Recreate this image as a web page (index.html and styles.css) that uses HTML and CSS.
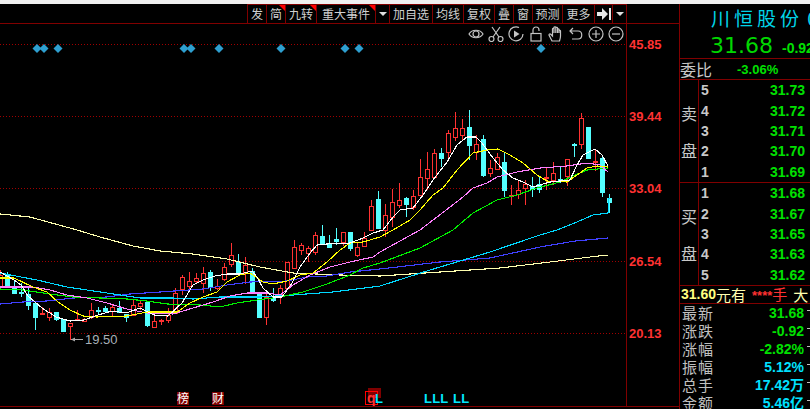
FILE: index.html
```html
<!DOCTYPE html>
<html lang="zh-CN">
<head>
    <meta charset="UTF-8">
    <title>川恒股份 K线</title>
    <link rel="stylesheet" href="styles.css">
</head>
<body>
    <div class="strip"></div>
    <div class="page">
        <div class="main">
            <div class="toolbar">
                <div class="btn w19">发</div>
                <div class="btn w19 flag">简</div>
                <div class="btn w31 flag">九转</div>
                <div class="btn w59 flag">重大事件</div>
                <div class="btn w14"><span class="caret"></span></div>
                <div class="btn w43">加自选</div>
                <div class="btn w31">均线</div>
                <div class="btn w31">复权</div>
                <div class="btn w19">叠</div>
                <div class="btn w19">窗</div>
                <div class="btn w30">预测</div>
                <div class="btn w32">更多</div>
                <div class="btn w18">
                    <svg width="14" height="12" viewBox="0 0 14 12"><path class="solid" d="M0 4H5V0L11 6L5 12V8H0ZM12 0H14V12H12Z"/></svg>
                </div>
                <div class="btn w15"><span class="caret"></span></div>
            </div>

            <div class="tools">
                <svg class="tool" viewBox="0 0 16 16"><path d="M1 8C4 3 12 3 15 8C12 13 4 13 1 8Z"/><circle cx="8" cy="8" r="3"/></svg>
                <svg class="tool" viewBox="0 0 16 16"><circle cx="3.5" cy="13" r="2.5"/><circle cx="12.5" cy="13" r="2.5"/><path d="M5 11L12 1M11 11L4 1"/></svg>
                <svg class="tool" viewBox="0 0 16 16"><path d="M11 1.5A7 7 0 1 0 15 8"/><path class="solid" d="M6 4.5L11.5 8L6 11.5Z"/></svg>
                <svg class="tool" viewBox="0 0 16 16"><rect x="3" y="7.5" width="10" height="7.5"/><path d="M5 7.5V4A3 3 0 0 1 11 4V5"/></svg>
                <svg class="tool" viewBox="0 0 16 16"><path d="M4 15L1 9C1 8 2 7.5 3 8.5L4.5 10V3C4.5 2 6 2 6 3V7V1.5C6 .5 7.8 .5 7.8 1.5V7V2C7.8 1 9.5 1 9.5 2V7V3.5C9.5 2.5 11 2.5 11 3.5V7V5C11 4 12.5 4 12.5 5V10C12.5 12 12 13.5 11.5 15Z"/></svg>
                <svg class="tool" viewBox="0 0 16 16"><path d="M5 2L2 5L5 8M2 5H10C15 5 15 13 10 13H4"/></svg>
                <svg class="tool" viewBox="0 0 16 16"><circle cx="8" cy="8" r="7"/><path d="M4 8H12M8 4V12"/></svg>
                <svg class="tool" viewBox="0 0 16 16"><circle cx="8" cy="8" r="7"/><path d="M4 8H12"/></svg>
            </div>

            <svg class="chart" viewBox="0 24 679 385" width="679" height="385">
                <line class="axis" x1="626.5" y1="24" x2="626.5" y2="406"/>
                <line class="axis" x1="0" y1="406.5" x2="679" y2="406.5"/>
                <line class="grid" x1="0" y1="44.5" x2="626" y2="44.5"/>
                <line class="grid" x1="0" y1="116.5" x2="626" y2="116.5"/>
                <line class="grid" x1="0" y1="188.5" x2="626" y2="188.5"/>
                <line class="grid" x1="0" y1="261.5" x2="626" y2="261.5"/>
                <line class="grid" x1="0" y1="333.5" x2="626" y2="333.5"/>

                <text class="price-label" x="629" y="49">45.85</text>
                <text class="price-label" x="629" y="121">39.44</text>
                <text class="price-label" x="629" y="193">33.04</text>
                <text class="price-label" x="629" y="266">26.54</text>
                <text class="price-label" x="629" y="338">20.13</text>

                <g id="diamonds"></g>
                <g id="candles"></g>

                <polyline class="ma ma-pale" points="0,214 30,217 77,230 100,237 133,246 160,251 193,254 227,259 260,267 293,273 340,275 380,276 440,272 500,268 550,262 590,257 608,255"/>
                <polyline class="ma ma-blue" points="0,304 23,302 47,301 73,298 107,297 130,294 160,292 203,289 227,285 250,282 287,281 307,277 327,276 350,272 380,269 440,262 490,258 540,247 575,241 608,238"/>
                <polyline class="ma ma-cyan" points="0,273 37,280 67,287 107,293 140,298 173,298 193,299 220,297 260,297 293,295 333,292 380,286 430,270 490,252 540,235 557,230 577,222 593,215 608,213 609,198"/>
                <polyline class="ma ma-green" points="0,289 23,290 50,294 73,297 100,298 127,299 147,301 167,304 200,305 220,307 237,303 257,300 280,297 303,292 327,284 350,275 363,268 380,263 420,248 453,230 473,213 497,200 517,195 537,188 560,182 573,176 587,170 608,168"/>
                <polyline class="ma ma-pink" points="0,287 33,287 50,290 67,295 87,298 107,303 127,309 147,313 173,314 193,308 213,302 230,296 247,293 267,293 280,295 293,285 310,275 330,267 350,262 373,257 380,252 420,230 437,217 463,197 473,188 487,183 497,177 517,172 540,168 567,166 587,163 600,165 608,172"/>
                <polyline class="ma ma-yellow" points="0,278 14,278 33,287 47,292 58,302 70,310 83,316 97,317 127,316 147,312 177,312 190,303 203,297 217,292 227,282 240,275 250,273 263,282 273,284 287,281 300,275 313,273 327,262 340,250 350,243 363,242 380,237 393,230 410,220 420,210 433,195 443,188 457,170 473,153 487,150 498,149 510,155 523,163 537,175 547,181 567,182 577,175 587,168 597,166 608,167"/>
                <polyline class="ma ma-white" points="0,272 14,280 21,285 28,296 42,308 56,317 70,321 84,320 98,315 112,311 126,313 140,308 154,315 168,316 182,303 193,285 203,280 215,276 227,274 240,274 252,271 257,277 263,288 273,297 282,297 292,283 300,267 310,253 317,245 327,244 350,243 363,238 373,233 383,230 393,217 400,210 413,208 423,195 433,180 447,162 457,145 467,137 476,137 482,143 493,158 503,170 513,178 523,182 533,187 550,182 570,180 577,165 583,155 595,149 602,155 608,166"/>

                <line class="low-arrow" x1="71" y1="339.5" x2="83" y2="339.5"/>
                <path class="low-head" d="M71 339.5L75 337.5V341.5Z"/>
                <text class="low-label" x="85" y="344">19.50</text>

                <rect class="mark-box" x="177" y="392" width="12" height="13"/>
                <text class="mark-text" x="177" y="403">榜</text>
                <rect class="mark-box" x="212" y="392" width="12" height="13"/>
                <text class="mark-text" x="212" y="403">财</text>
                <rect class="mark-box" x="368" y="388" width="13" height="10"/>
                <rect class="mark-frame" x="365.5" y="391.5" width="12" height="13"/>
                <text class="mark-q" x="367" y="403">q</text>
                <text class="mark-l" x="375" y="403">L</text>
                <text class="mark-l" x="424" y="403">LLL</text>
                <text class="mark-l" x="453" y="403">LL</text>
            </svg>
        </div>

        <div class="side">
            <div class="title">川恒股份 0</div>
            <div class="last-row">
                <span class="last">31.68</span>
                <span class="change">-0.92</span>
            </div>
            <div class="ratio-row">
                <span class="ratio-label">委比</span>
                <span class="ratio-value">-3.06%</span>
            </div>

            <div class="book">
                <div class="book-side"><span>卖</span><span>盘</span></div>
                <div class="book-rows">
                    <div class="book-row"><b>5</b><span>31.73</span></div>
                    <div class="book-row"><b>4</b><span>31.72</span></div>
                    <div class="book-row"><b>3</b><span>31.71</span></div>
                    <div class="book-row"><b>2</b><span>31.70</span></div>
                    <div class="book-row"><b>1</b><span>31.69</span></div>
                </div>
            </div>
            <div class="book">
                <div class="book-side"><span>买</span><span>盘</span></div>
                <div class="book-rows">
                    <div class="book-row"><b>1</b><span>31.68</span></div>
                    <div class="book-row"><b>2</b><span>31.67</span></div>
                    <div class="book-row"><b>3</b><span>31.65</span></div>
                    <div class="book-row"><b>4</b><span>31.63</span></div>
                    <div class="book-row"><b>5</b><span>31.62</span></div>
                </div>
            </div>

            <div class="order-row">
                <b>31.60</b><span class="order-unit">元有</span><span class="order-qty"><i>****</i>手</span><span class="order-unit">大</span>
            </div>

            <div class="stat"><span>最新</span><b class="up">31.68</b></div>
            <div class="stat"><span>涨跌</span><b class="up">-0.92</b></div>
            <div class="stat"><span>涨幅</span><b class="up">-2.82%</b></div>
            <div class="stat"><span>振幅</span><b class="info">5.12%</b></div>
            <div class="stat"><span>总手</span><b class="info">17.42万</b></div>
            <div class="stat"><span>金额</span><b class="info">5.46亿</b></div>
        </div>
    </div>
    <script src="chart.js"></script>
</body>
</html>
```

FILE: styles.css
```css
/* Terminal look: black background, dark red rules */
* {
    box-sizing: border-box;
}
html, body {
    margin: 0;
    width: 810px;
    height: 409px;
    overflow: hidden;
    background-color: #000;
    font-family: "Noto Sans CJK SC", "Liberation Sans", sans-serif;
}
.strip {
    height: 4px;
    background-color: #f0f0f0;
}
.page {
    display: flex;
    height: 405px;
}
.main {
    position: relative;
    width: 679px;
    flex: none;
}

/* Toolbar */
.toolbar {
    display: flex;
    justify-content: flex-end;
    height: 20px;
    padding-right: 52px;
    border-bottom: 1px solid #800000;
}
.btn {
    position: relative;
    display: flex;
    align-items: center;
    justify-content: center;
    flex: none;
    border-top: 1px solid #800000;
    border-left: 1px solid #800000;
    color: #d0d0d0;
    font-size: 12px;
    line-height: 18px;
    white-space: nowrap;
}
.btn:last-child {
    border-right: 1px solid #800000;
}
.flag::after {
    content: "";
    position: absolute;
    top: 0;
    right: 0;
    border-top: 6px solid #ff0000;
    border-left: 6px solid transparent;
}
.w14 { width: 14px; }
.w15 { width: 15px; }
.w18 { width: 18px; }
.w19 { width: 19px; }
.w30 { width: 30px; }
.w31 { width: 31px; }
.w32 { width: 32px; }
.w43 { width: 43px; }
.w59 { width: 59px; }
.caret {
    border-top: 4px solid #e0e0e0;
    border-left: 4px solid transparent;
    border-right: 4px solid transparent;
}
.solid {
    fill: #e8e8e8;
    stroke: none;
}

/* Tools over the chart */
.tools {
    position: absolute;
    top: 22px;
    right: 55px;
    display: flex;
    gap: 4px;
}
.tool {
    width: 16px;
    height: 16px;
    fill: none;
    stroke: #c4c4c4;
    stroke-width: 1.2;
}
.tool .solid {
    fill: #c4c4c4;
}

/* Chart */
.chart {
    display: block;
}
.axis {
    stroke: #800000;
    stroke-width: 1;
}
.grid {
    stroke: #a00000;
    stroke-width: 1;
    stroke-dasharray: 1 2;
}
.price-label {
    fill: #ff3232;
    font-family: "Liberation Sans", sans-serif;
    font-size: 13px;
    font-weight: bold;
}
.ma {
    fill: none;
    stroke-width: 1.1;
    shape-rendering: crispEdges;
}
.ma-white { stroke: #ffffff; }
.ma-yellow { stroke: #ffff00; }
.ma-pink { stroke: #ff80ff; }
.ma-green { stroke: #00f000; }
.ma-blue { stroke: #4040ff; }
.ma-cyan { stroke: #00d8ff; }
.ma-pale { stroke: #ffffb0; }
.candle-up {
    fill: #000;
    stroke: #ff3232;
    stroke-width: 1;
    shape-rendering: crispEdges;
}
.candle-down {
    fill: #54ffff;
    stroke: #54ffff;
    stroke-width: 1;
    shape-rendering: crispEdges;
}
.diamond {
    fill: #2e9fd0;
}
.low-arrow {
    stroke: #a8a8a8;
    stroke-width: 1;
}
.low-head {
    fill: #a8a8a8;
}
.low-label {
    fill: #a8b0b8;
    font-family: "Liberation Sans", sans-serif;
    font-size: 13px;
}
.mark-box {
    fill: #800000;
}
.mark-frame {
    fill: none;
    stroke: #ff0000;
    stroke-width: 1;
}
.mark-text {
    fill: #fff;
    font-size: 12px;
}
.mark-q {
    fill: #ff3232;
    font-family: "Liberation Sans", sans-serif;
    font-size: 14px;
    font-weight: bold;
}
.mark-l {
    fill: #00e8ff;
    font-family: "Liberation Sans", sans-serif;
    font-size: 13px;
    font-weight: bold;
    letter-spacing: 0.2px;
}

/* Right panel */
.side {
    flex: 1;
    min-width: 0;
    overflow: hidden;
    border-left: 1px solid #800000;
    white-space: nowrap;
}
.title {
    height: 27px;
    padding-left: 31px;
    color: #00d4e8;
    font-size: 19px;
    line-height: 27px;
    letter-spacing: 4px;
    word-spacing: -4px;
}
.last-row {
    display: flex;
    align-items: baseline;
    gap: 9px;
    height: 28px;
    padding-left: 30px;
    border-bottom: 1px solid #800000;
}
.last {
    color: #00d800;
    font-family: "DejaVu Sans", sans-serif;
    font-size: 22px;
    line-height: 29px;
}
.change {
    color: #00e000;
    font-family: "Liberation Sans", sans-serif;
    font-size: 14px;
    font-weight: bold;
}
.ratio-row {
    display: flex;
    align-items: center;
    height: 21px;
    border-bottom: 1px solid #800000;
}
.ratio-label {
    width: 57px;
    color: #c8c8c8;
    font-size: 16px;
    line-height: 20px;
}
.ratio-value {
    color: #00e000;
    font-family: "Liberation Sans", sans-serif;
    font-size: 13px;
    font-weight: bold;
}
.book {
    display: flex;
    height: 103px;
    border-bottom: 1px solid #800000;
}
.book-side {
    display: flex;
    flex-direction: column;
    gap: 21px;
    width: 19px;
    padding: 25px 0 0 1px;
    border-right: 1px solid #800000;
    color: #c8c8c8;
    font-size: 16px;
    line-height: 16px;
}
.book-rows {
    display: flex;
    flex-direction: column;
    flex: 1;
}
.book-row {
    display: flex;
    align-items: center;
    justify-content: space-between;
    height: 20.4px;
    padding: 0 5px 0 2px;
    font-family: "Liberation Sans", sans-serif;
    font-size: 14px;
}
.book-row b {
    color: #c8c8c8;
}
.book-row span {
    color: #00e000;
    font-weight: bold;
}
.order-row {
    display: flex;
    align-items: center;
    height: 18px;
    padding-left: 1px;
    line-height: 17px;
    border-bottom: 1px solid #800000;
}
.order-row b {
    color: #ffff80;
    font-family: "Liberation Sans", sans-serif;
    font-size: 14px;
}
.order-unit {
    color: #ffffb0;
    font-size: 15px;
}
.order-qty {
    margin: 0 6px 0 6px;
    color: #ff3232;
    font-size: 15px;
}
.order-qty i {
    font-family: "Liberation Sans", sans-serif;
    font-size: 13px;
    font-style: normal;
    font-weight: bold;
}
.stat {
    position: relative;
    display: flex;
    align-items: center;
    justify-content: space-between;
    height: 18px;
    padding: 0 6px 0 2px;
    line-height: 18px;
}
/* little tick at the panel's right edge */
.stat::after {
    content: "";
    position: absolute;
    top: 6px;
    right: 0;
    width: 3px;
    height: 1px;
    background-color: #c0c0c0;
}
.stat span {
    color: #c0c0c0;
    font-size: 15px;
    letter-spacing: 1px;
}
.stat b {
    font-family: "Liberation Sans", "Noto Sans CJK SC", sans-serif;
    font-size: 14px;
}
.up {
    color: #00e000;
}
.info {
    color: #00e0ff;
}
```

FILE: chart.js
```js
// K线数据: [实体上沿, 实体下沿, 最高, 最低, 1=阳线 0=阴线], 单位是页面像素
const kline = [
    [275, 287, 270, 290, 1], [274, 285, 272, 287, 0], [287, 293, 280, 293, 0], [292, 292, 283, 297, 0],
    [294, 305, 287, 310, 0], [303, 317, 303, 330, 0], [313, 313, 307, 315, 1], [312, 317, 308, 321, 1],
    [312, 319, 312, 321, 0], [319, 331, 319, 331, 0], [323, 326, 323, 340, 1], [319, 319, 310, 321, 1],
    [319, 321, 318, 322, 1], [310, 317, 303, 319, 1], [310, 310, 307, 315, 0], [308, 311, 306, 312, 0],
    [307, 311, 304, 316, 1], [308, 312, 301, 313, 0], [314, 317, 314, 322, 0], [305, 315, 300, 316, 1],
    [303, 306, 301, 310, 1], [302, 325, 302, 327, 0], [321, 327, 315, 328, 1], [320, 321, 319, 325, 1],
    [315, 320, 308, 323, 1], [293, 313, 288, 314, 1], [277, 289, 275, 295, 1], [281, 286, 272, 290, 1],
    [278, 281, 273, 283, 1], [273, 283, 267, 293, 1], [272, 287, 270, 291, 0], [286, 288, 279, 290, 1],
    [267, 279, 263, 281, 1], [255, 264, 243, 267, 1], [262, 273, 254, 273, 0], [265, 273, 257, 284, 1],
    [271, 293, 268, 293, 0], [293, 317, 293, 318, 0], [297, 317, 293, 325, 1], [298, 300, 288, 302, 0],
    [288, 296, 285, 304, 1], [262, 288, 262, 290, 1], [247, 268, 240, 268, 1], [245, 250, 243, 255, 1],
    [248, 253, 246, 262, 1], [235, 252, 232, 255, 1], [236, 244, 225, 245, 0], [243, 247, 235, 248, 0],
    [239, 241, 228, 245, 0], [232, 242, 232, 246, 1], [232, 248, 232, 251, 0], [247, 255, 243, 257, 1],
    [238, 246, 232, 246, 1], [206, 230, 200, 231, 1], [199, 228, 191, 228, 0], [215, 230, 204, 237, 1],
    [202, 217, 189, 227, 1], [200, 205, 183, 208, 1], [198, 204, 197, 217, 0], [196, 207, 190, 210, 1],
    [177, 195, 159, 195, 1], [169, 178, 152, 190, 1], [153, 177, 149, 178, 1], [153, 158, 148, 167, 0],
    [133, 152, 130, 160, 1], [128, 137, 112, 141, 1], [128, 135, 119, 140, 1], [127, 145, 110, 160, 0],
    [144, 152, 135, 160, 1], [139, 175, 135, 177, 0], [168, 173, 160, 177, 1], [157, 169, 153, 169, 1],
    [162, 190, 153, 197, 0], [195, 195, 185, 205, 1], [190, 194, 180, 199, 1], [184, 188, 180, 205, 1],
    [186, 189, 177, 197, 0], [184, 189, 176, 193, 0], [177, 177, 168, 190, 1], [173, 180, 162, 185, 1],
    [179, 179, 167, 183, 0], [159, 176, 159, 186, 1], [144, 144, 143, 157, 0], [118, 144, 113, 149, 1],
    [127, 158, 127, 158, 0], [161, 161, 149, 171, 1], [158, 192, 157, 197, 0], [198, 202, 194, 213, 0]
];

const diamondXs = [37, 44, 58, 184, 191, 219, 281, 345, 359, 541];
const SVG_NS = 'http://www.w3.org/2000/svg';

function add(parent, tag, attrs) {
    const el = document.createElementNS(SVG_NS, tag);
    for (const name in attrs) el.setAttribute(name, attrs[name]);
    parent.appendChild(el);
}

const candles = document.getElementById('candles');
kline.forEach((k, i) => {
    const [top, bottom, high, low, up] = k;
    const x = 7 * i;
    const cls = up ? 'candle-up' : 'candle-down';
    if (high < top) add(candles, 'line', { class: cls, x1: x + 0.5, y1: high, x2: x + 0.5, y2: top });
    if (low > bottom) add(candles, 'line', { class: cls, x1: x + 0.5, y1: bottom, x2: x + 0.5, y2: low });
    add(candles, 'rect', { class: cls, x: x - 1.5, y: top + 0.5, width: 4, height: Math.max(bottom - top, 1) });
});

const diamonds = document.getElementById('diamonds');
diamondXs.forEach((x) => {
    add(diamonds, 'polygon', { class: 'diamond', points: `${x - 4.5},48.5 ${x},44 ${x + 4.5},48.5 ${x},53` });
});
```
